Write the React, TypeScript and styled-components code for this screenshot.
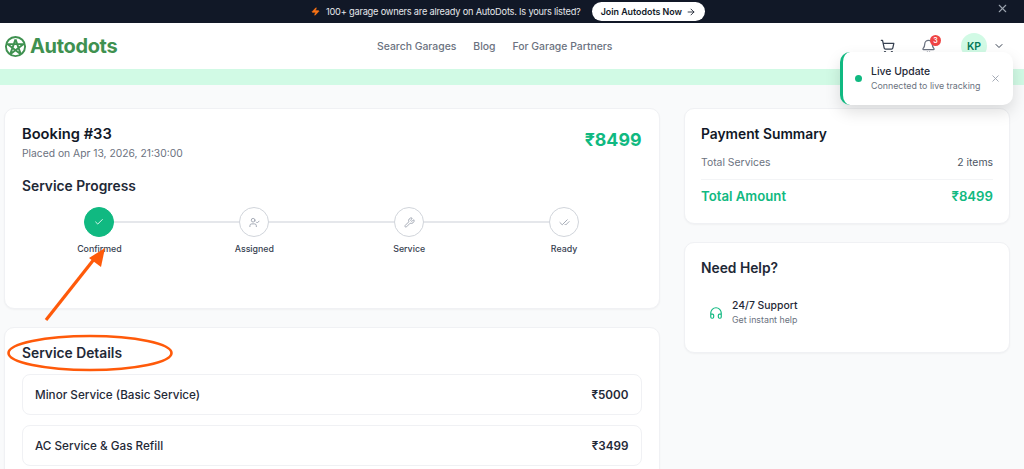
import React from "react";
import styled, { createGlobalStyle } from "styled-components";
import {
  ArrowRight,
  Bell,
  Check,
  CheckCheck,
  ChevronDown,
  Headphones,
  ShoppingCart,
  UserCheck,
  Wrench,
  X,
  Zap
} from "lucide-react";

const GlobalStyle = createGlobalStyle`
  html, body {
    margin: 0;
    padding: 0;
    background: #f9fafb;
    font-family: Inter, "Liberation Sans", sans-serif;
    color: #111827;
  }
`;

const Page = styled.div`
  position: relative;
  width: 1024px;
  height: 469px;
  overflow: hidden;
  background: #f9fafb;
`;

const PromoBar = styled.div`
  position: relative;
  display: flex;
  align-items: center;
  justify-content: center;
  gap: 11px;
  height: 23px;
  padding-right: 8px;
  background: #111827;
  color: #e5e7eb;
  font-size: 9.25px;
  font-weight: 400;
`;

const PromoText = styled.span`
  display: flex;
  align-items: center;
  gap: 6px;
  letter-spacing: -0.22px;
`;

const JoinButton = styled.button`
  display: flex;
  align-items: center;
  gap: 4px;
  height: 19px;
  padding: 0 9px 0 9px;
  border: 0;
  border-radius: 10px;
  background: #fff;
  color: #111827;
  font-family: inherit;
  font-size: 8.9px;
  font-weight: 600;
`;

const PromoClose = styled.span`
  position: absolute;
  right: 15px;
  top: 2px;
  display: flex;
  color: #9ca3af;
`;

const Header = styled.header`
  display: flex;
  align-items: center;
  height: 46px;
  padding: 0 19px 0 4px;
  background: #fff;
`;

const Logo = styled.div`
  display: flex;
  align-items: center;
  gap: 3px;
  width: 373px;
  color: #3f9150;
  font-size: 20px;
  font-weight: 700;
  letter-spacing: -0.35px;
`;

const Nav = styled.nav`
  display: flex;
  gap: 17px;
  flex: 1;
`;

const NavLink = styled.a`
  color: #6b7280;
  font-size: 10.4px;
  font-weight: 500;
`;

const HeaderActions = styled.div`
  display: flex;
  align-items: center;
  color: #374151;
`;

const BellWrap = styled.span`
  position: relative;
  display: flex;
  margin-left: 26px;
  color: #6b7280;
`;

const BellBadge = styled.span`
  position: absolute;
  top: -4px;
  right: -5px;
  width: 11px;
  height: 11px;
  border-radius: 50%;
  background: #ef4444;
  color: #fff;
  font-size: 7px;
  font-weight: 600;
  line-height: 11px;
  text-align: center;
`;

const Avatar = styled.span`
  display: flex;
  align-items: center;
  justify-content: center;
  width: 26px;
  height: 26px;
  margin: 0 6px 0 25px;
  border-radius: 50%;
  background: #d1fae5;
  color: #047857;
  font-size: 10.5px;
  font-weight: 600;
`;

const GreenStrip = styled.div`
  height: 16px;
  background: #d1fae5;
`;

const Toast = styled.div`
  position: absolute;
  top: 52px;
  left: 840px;
  display: flex;
  align-items: center;
  width: 173px;
  height: 53px;
  box-sizing: border-box;
  padding: 0 11px 0 12px;
  border-left: 3px solid #10b981;
  border-radius: 10px;
  background: #fff;
  box-shadow: 0 7px 16px rgba(0, 0, 0, 0.13);
`;

const ToastDot = styled.span`
  width: 7px;
  height: 7px;
  margin-right: 9px;
  border-radius: 50%;
  background: #10b981;
`;

const ToastBody = styled.div`
  flex: 1;
`;

const ToastTitle = styled.div`
  margin-top: 1px;
  color: #1f2937;
  font-size: 10.4px;
  font-weight: 500;
  line-height: 14px;
`;

const ToastText = styled.div`
  color: #6b7280;
  font-size: 8.85px;
  line-height: 14px;
`;

const ToastClose = styled.span`
  display: flex;
  margin-right: 1px;
  color: #9ca3af;
`;

const Main = styled.main`
  display: grid;
  grid-template-columns: 655.5px 326px;
  gap: 24.5px;
  padding: 23px 14px 0 4px;
`;

const Column = styled.div`
  display: flex;
  flex-direction: column;
  gap: 18px;
`;

const Card = styled.section<{ $height: number }>`
  box-sizing: border-box;
  height: ${({ $height }) => $height}px;
  padding: 16px 17px;
  border: 1px solid #f0f1f4;
  border-radius: 10px;
  background: #fff;
  box-shadow: 0 1px 2px rgba(0, 0, 0, 0.04);
`;

const SideCard = styled(Card)`
  padding: 16px;
`;

const BookingHead = styled.div`
  display: flex;
  align-items: flex-start;
  justify-content: space-between;
`;

const BookingTitle = styled.h1`
  margin: 0;
  font-size: 14.7px;
  font-weight: 600;
  line-height: 18px;
`;

const PlacedOn = styled.div`
  margin-top: 3px;
  color: #6b7280;
  font-size: 10.3px;
  line-height: 14px;
`;

const Price = styled.div`
  margin-top: 2px;
  color: #10b981;
  font-size: 17.8px;
  font-weight: 700;
  line-height: 26px;
`;

const SectionTitle = styled.h2`
  margin: 0;
  color: #1f2937;
  font-size: 13.8px;
  font-weight: 600;
  line-height: 18px;
`;

const ProgressTitle = styled(SectionTitle)`
  margin-top: 17px;
`;

const Stepper = styled.div`
  position: relative;
  display: grid;
  grid-template-columns: repeat(4, 1fr);
  margin-top: 12px;

  &::before {
    content: "";
    position: absolute;
    top: 14px;
    left: 12.5%;
    right: 12.5%;
    height: 2px;
    background: #e5e7eb;
  }
`;

const Step = styled.div`
  position: relative;
  display: flex;
  flex-direction: column;
  align-items: center;
  gap: 6px;
`;

const StepCircle = styled.span<{ $done?: boolean }>`
  display: flex;
  align-items: center;
  justify-content: center;
  box-sizing: border-box;
  width: 30px;
  height: 30px;
  border: 1.5px solid ${({ $done }) => ($done ? "#10b981" : "#d1d5db")};
  border-radius: 50%;
  background: ${({ $done }) => ($done ? "#10b981" : "#fff")};
  color: ${({ $done }) => ($done ? "#fff" : "#9ca3af")};
`;

const StepLabel = styled.span`
  color: #374151;
  font-size: 8.8px;
  font-weight: 500;
  line-height: 12px;
`;

const ServiceRow = styled.div`
  display: flex;
  align-items: center;
  justify-content: space-between;
  box-sizing: border-box;
  height: 41px;
  margin-top: 10px;
  padding: 0 12px;
  border: 1px solid #f0f1f4;
  border-radius: 8px;
  font-size: 11.7px;
  font-weight: 500;
  color: #1f2937;
`;

const RowPrice = styled.span`
  font-weight: 600;
`;

const ServiceTitle = styled(SectionTitle)`
  margin-bottom: 12px;
`;

const SummaryTitle = styled(SectionTitle)`
  margin: 0 0 13px;
  color: #111827;
`;

const SummaryRow = styled.div`
  display: flex;
  justify-content: space-between;
  padding-bottom: 9px;
  border-bottom: 1px solid #f3f4f6;
  color: #6b7280;
  font-size: 10.4px;
  line-height: 14px;
`;

const ItemsCount = styled.span`
  color: #4b5563;
`;

const TotalRow = styled.div`
  display: flex;
  justify-content: space-between;
  margin-top: 7px;
  color: #10b981;
  font-size: 13.2px;
  font-weight: 600;
  line-height: 18px;
`;

const HelpRow = styled.div`
  display: flex;
  align-items: center;
  gap: 9px;
  margin-top: 22px;
  padding-left: 8px;
`;

const HelpIcon = styled.span`
  display: flex;
  color: #10b981;
`;

const HelpTitle = styled.div`
  color: #1f2937;
  font-size: 10.4px;
  font-weight: 500;
  line-height: 14px;
`;

const HelpText = styled.div`
  margin-top: 1px;
  color: #6b7280;
  font-size: 8.8px;
  line-height: 12px;
`;

const Markup = styled.svg`
  position: absolute;
  inset: 0;
  pointer-events: none;
`;

const AutodotsMark = () => (
  <svg width="23" height="23" viewBox="0 0 24 24" fill="none" stroke="currentColor" strokeWidth="2">
    <circle cx="12" cy="12" r="10" />
    <path d="M12 4.5 L6.5 20 M12 4.5 L17.5 20 M3 9.5 H21 M3.5 9.5 L17.5 20 M20.5 9.5 L6.5 20" />
  </svg>
);

const steps = [
  { label: "Confirmed", icon: <Check size={10} />, done: true },
  { label: "Assigned", icon: <UserCheck size={11} /> },
  { label: "Service", icon: <Wrench size={11} /> },
  { label: "Ready", icon: <CheckCheck size={11} /> }
];

const App = () => {
  return (
    <Page>
      <GlobalStyle />
      <PromoBar>
        <PromoText>
          <Zap size={9} color="#f97316" fill="#f97316" />
          100+ garage owners are already on AutoDots. Is yours listed?
        </PromoText>
        <JoinButton>
          Join Autodots Now <ArrowRight size={10} />
        </JoinButton>
        <PromoClose>
          <X size={13} />
        </PromoClose>
      </PromoBar>
      <Header>
        <Logo>
          <AutodotsMark />
          Autodots
        </Logo>
        <Nav>
          <NavLink>Search Garages</NavLink>
          <NavLink>Blog</NavLink>
          <NavLink>For Garage Partners</NavLink>
        </Nav>
        <HeaderActions>
          <ShoppingCart size={15} />
          <BellWrap>
            <Bell size={15} />
            <BellBadge>3</BellBadge>
          </BellWrap>
          <Avatar>KP</Avatar>
          <ChevronDown size={12} />
        </HeaderActions>
      </Header>
      <GreenStrip />
      <Main>
        <Column>
          <Card $height={201}>
            <BookingHead>
              <div>
                <BookingTitle>Booking #33</BookingTitle>
                <PlacedOn>Placed on Apr 13, 2026, 21:30:00</PlacedOn>
              </div>
              <Price>₹8499</Price>
            </BookingHead>
            <ProgressTitle>Service Progress</ProgressTitle>
            <Stepper>
              {steps.map(step => (
                <Step key={step.label}>
                  <StepCircle $done={step.done}>{step.icon}</StepCircle>
                  <StepLabel>{step.label}</StepLabel>
                </Step>
              ))}
            </Stepper>
          </Card>
          <Card $height={160}>
            <ServiceTitle>Service Details</ServiceTitle>
            <ServiceRow>
              <span>Minor Service (Basic Service)</span>
              <RowPrice>₹5000</RowPrice>
            </ServiceRow>
            <ServiceRow>
              <span>AC Service &amp; Gas Refill</span>
              <RowPrice>₹3499</RowPrice>
            </ServiceRow>
          </Card>
        </Column>
        <Column>
          <SideCard $height={116}>
            <SummaryTitle>Payment Summary</SummaryTitle>
            <SummaryRow>
              <span>Total Services</span>
              <ItemsCount>2 items</ItemsCount>
            </SummaryRow>
            <TotalRow>
              <span>Total Amount</span>
              <span>₹8499</span>
            </TotalRow>
          </SideCard>
          <SideCard $height={111}>
            <SectionTitle>Need Help?</SectionTitle>
            <HelpRow>
              <HelpIcon>
                <Headphones size={14} />
              </HelpIcon>
              <div>
                <HelpTitle>24/7 Support</HelpTitle>
                <HelpText>Get instant help</HelpText>
              </div>
            </HelpRow>
          </SideCard>
        </Column>
      </Main>
      <Toast>
        <ToastDot />
        <ToastBody>
          <ToastTitle>Live Update</ToastTitle>
          <ToastText>Connected to live tracking</ToastText>
        </ToastBody>
        <ToastClose>
          <X size={11} />
        </ToastClose>
      </Toast>
      <Markup width="1024" height="469" viewBox="0 0 1024 469" fill="none">
        <path d="M46 320 L95 258" stroke="#ff5a0a" strokeWidth="3.2" />
        <path d="M105 248 L89 258 L101 267 Z" fill="#ff5a0a" />
        <ellipse cx="90" cy="353" rx="81.5" ry="17" stroke="#ff5a0a" strokeWidth="2.6" />
      </Markup>
    </Page>
  );
};

export default App;
